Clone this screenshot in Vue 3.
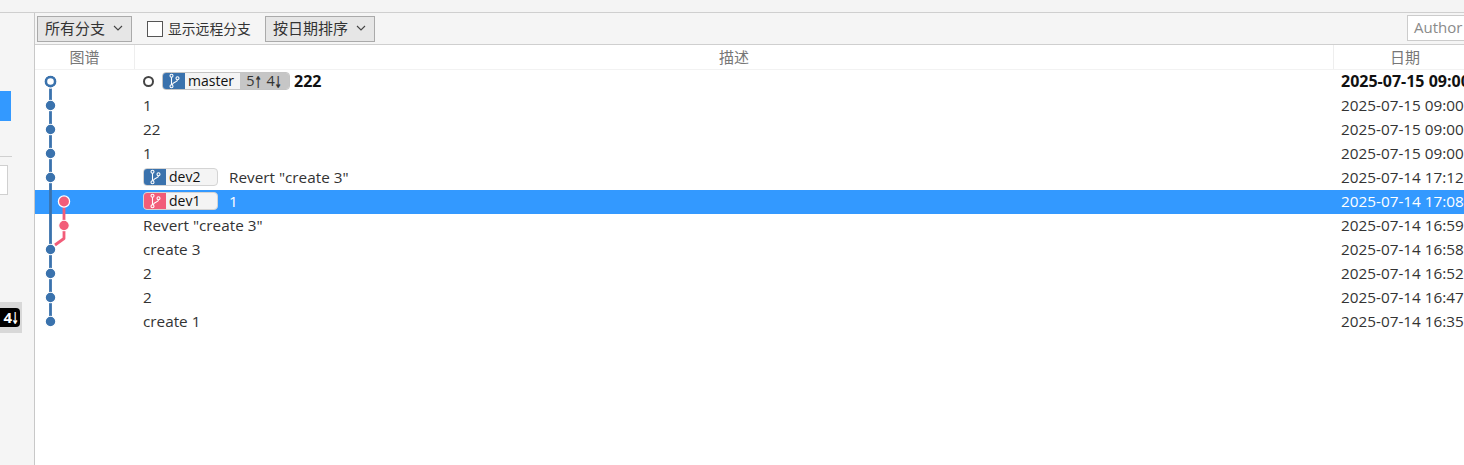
<script setup>
const rows = [
  { id: 0, msg: '222', date: '2025-07-15 09:00', bold: true, head: true, refs: [{ name: 'master', color: 'blue', track: true }] },
  { id: 1, msg: '1', date: '2025-07-15 09:00' },
  { id: 2, msg: '22', date: '2025-07-15 09:00' },
  { id: 3, msg: '1', date: '2025-07-15 09:00' },
  { id: 4, msg: 'Revert "create 3"', date: '2025-07-14 17:12', refs: [{ name: 'dev2', color: 'blue' }] },
  { id: 5, msg: '1', date: '2025-07-14 17:08', selected: true, refs: [{ name: 'dev1', color: 'red' }] },
  { id: 6, msg: 'Revert "create 3"', date: '2025-07-14 16:59' },
  { id: 7, msg: 'create 3', date: '2025-07-14 16:58' },
  { id: 8, msg: '2', date: '2025-07-14 16:52' },
  { id: 9, msg: '2', date: '2025-07-14 16:47' },
  { id: 10, msg: 'create 1', date: '2025-07-14 16:35' },
]
const blueDots = [1, 2, 3, 4, 7, 8, 9, 10].map((i) => 11.5 + i * 24)
</script>

<template>
  <div class="app">
    <div class="topstrip"></div>
    <div class="body">
      <aside class="side">
        <div class="side-active"></div>
        <div class="side-rule"></div>
        <div class="side-input"></div>
        <div class="side-badge"><span>4<b class="arr">↓</b></span></div>
      </aside>
      <main class="main">
        <div class="toolbar">
          <div class="select sel1"><span>所有分支</span>
            <svg width="10" height="6" viewBox="0 0 10 6"><path d="M1 1l4 4 4-4" fill="none" stroke="#444" stroke-width="1.1"/></svg>
          </div>
          <label class="check"><i class="box"></i><span>显示远程分支</span></label>
          <div class="select sel2"><span>按日期排序</span>
            <svg width="10" height="6" viewBox="0 0 10 6"><path d="M1 1l4 4 4-4" fill="none" stroke="#444" stroke-width="1.1"/></svg>
          </div>
          <div class="author">Author</div>
        </div>
        <div class="header">
          <div class="c-graph">图谱</div>
          <div class="c-desc">描述</div>
          <div class="c-date">日期</div>
        </div>
        <div class="list">
          <svg class="graph" width="100" height="264" viewBox="0 0 100 264">
            <path d="M15.500 11.500V251.500" stroke="#3a72ad" stroke-width="2.800" fill="none"/>
            <path d="M29 131.500V168.500L20 175" stroke="#f25d79" stroke-width="2.800" fill="none" stroke-linejoin="round"/>
            <circle cx="15.500" cy="11.500" r="4.700" fill="#fff" stroke="#3a72ad" stroke-width="2.800"/>
            <circle cx="15.500" cy="11.500" r="6.700" fill="none" stroke="#fff" stroke-width="1.200"/>
            <circle v-for="y in blueDots" :key="y" cx="15.500" :cy="y" r="5.300" fill="#3a72ad" stroke="#fff" stroke-width="1.100"/>
            <circle cx="29" cy="131.500" r="5.600" fill="#f25d79" stroke="#fff" stroke-width="1.300"/>
            <circle cx="29" cy="155.500" r="5.300" fill="#f25d79" stroke="#fff" stroke-width="1.100"/>
          </svg>
          <div v-for="r in rows" :key="r.id" class="row" :class="{ selected: r.selected, bold: r.bold }">
            <div class="r-graph"></div>
            <div class="r-desc">
              <i v-if="r.head" class="head"></i>
              <span v-for="ref in r.refs" :key="ref.name" class="ref" :class="[ref.color, { track: ref.track }]">
                <span class="ico">
                  <svg width="14" height="16" viewBox="0 0 14 16" fill="none" stroke="#fff" stroke-width="1.100">
                    <circle cx="4.500" cy="2.800" r="1.500"/>
                    <circle cx="4.500" cy="13.200" r="1.500"/>
                    <circle cx="10.500" cy="5.300" r="1.500"/>
                    <path d="M4.500 4.300V11.700"/>
                    <path d="M10.500 6.800C10.500 9.500 6.500 8.500 5.200 11.800"/>
                  </svg>
                </span>
                <span class="name">{{ ref.name }}</span>
                <span v-if="ref.track" class="count">5<b class="arr">↑</b> 4<b class="arr">↓</b></span>
              </span>
              <span class="msg">{{ r.msg }}</span>
            </div>
            <div class="r-date">{{ r.date }}</div>
          </div>
        </div>
      </main>
    </div>
  </div>
</template>

<style>
html, body { margin: 0; padding: 0; background: #fff; overflow: hidden; }
</style>

<style scoped>
.app {
  width: 1464px;
  height: 465px;
  overflow: hidden;
  display: flex;
  flex-direction: column;
  font-family: "Open Sans", "Noto Sans CJK SC", sans-serif;
  font-size: 15.300px;
  color: #333;
}
.topstrip { height: 12px; background: #f4f4f4; border-bottom: 1px solid #cfcfcf; flex: none; }
.body { flex: 1; display: flex; min-height: 0; }

.side {
  width: 35px;
  flex: none;
  box-sizing: border-box;
  background: #f5f5f5;
  border-right: 1px solid #c8c8c8;
  position: relative;
  overflow: hidden;
}
.side-active { position: absolute; left: 0; top: 78px; width: 11px; height: 30px; background: #3399ff; }
.side-rule { position: absolute; left: 0; top: 143px; width: 12px; height: 1px; background: #d0d0d0; }
.side-input { position: absolute; left: -1px; top: 152px; width: 7px; height: 28px; background: #fff; border: 1px solid #d0d0d0; }
.side-badge {
  position: absolute; left: 0; top: 289px; width: 22px; height: 31px;
  background: #d8d8d8; display: flex; align-items: center;
}
.side-badge span {
  background: #000; color: #fff; font-weight: 700; font-size: 15px;
  border-radius: 0 4px 4px 0; height: 19px; line-height: 18px; width: 20px; text-align: right; box-sizing: border-box;
}

.main { flex: 1; min-width: 0; display: flex; flex-direction: column; }

.toolbar {
  height: 32px;
  flex: none;
  box-sizing: border-box;
  background: #f5f5f5;
  border-bottom: 1px solid #cfcfcf;
  display: flex;
  align-items: center;
  padding: 1px 0 0 2px;
  position: relative;
}
.select {
  height: 26px;
  box-sizing: border-box;
  border: 1px solid #aaa;
  background: #e6e6e6;
  display: flex;
  align-items: center;
  justify-content: space-between;
  padding: 0 8px 2px 7px;
  color: #333;
  font-size: 15px;
  line-height: 1;
}
.sel1 { width: 95px; }
.sel2 { width: 110px; }
.check { display: flex; align-items: center; width: 118px; margin-left: 15px; font-size: 13.800px; color: #333; gap: 5px; }
.check span { position: relative; top: -1px; }
.box { width: 16px; height: 16px; border: 1px solid #555; background: #fff; display: block; box-sizing: border-box; flex: none; }
.author {
  position: absolute;
  left: 1372px;
  top: 2px;
  width: 80px;
  height: 26px;
  box-sizing: border-box;
  background: #fff;
  border: 1px solid #ccc;
  padding-left: 6px;
  font-size: 15px;
  line-height: 22px;
  color: #8a8a8a;
}

.header {
  height: 25px;
  flex: none;
  display: flex;
  box-sizing: border-box;
  border-bottom: 1px solid #f2f2f2;
  color: #777;
  font-size: 15px;
  line-height: 24px;
  text-align: center;
}
.c-graph { width: 100px; border-right: 1px solid #eee; box-sizing: border-box; flex: none; }
.c-desc { width: 1199px; border-right: 1px solid #eee; box-sizing: border-box; flex: none; }
.c-date { width: 142px; flex: none; }

.list { position: relative; flex: 1; }
.graph { position: absolute; left: 0; top: 0; z-index: 1; pointer-events: none; }
.row { height: 24px; box-sizing: border-box; padding-bottom: 2px; display: flex; align-items: center; white-space: nowrap; }
.row.selected { background: #3399ff; color: #fff; }
.row.bold { font-weight: 700; color: #111; font-size: 16px; }
.r-graph { width: 100px; flex: none; }
.r-desc { width: 1198px; flex: none; display: flex; align-items: center; padding-left: 8px; box-sizing: border-box; }
.r-date { padding-left: 8px; flex: none; }

.head { width: 11px; height: 11px; box-sizing: border-box; border: 2.600px solid #444; border-radius: 50%; display: block; margin: 0 8px 0 0; }
.ref {
  display: flex;
  align-items: center;
  height: 18px;
  width: 75px;
  box-sizing: border-box;
  border-radius: 4px;
  border: 1px solid #d4d4d4;
  background: #f4f4f4;
  overflow: hidden;
  margin-right: 11px;
  font-weight: 400;
  font-size: 14px;
  color: #111;
}
.ref.track { width: 128px; margin-right: 4px; border-color: #c4c4c4; }
.ico { width: 22px; height: 18px; display: flex; align-items: center; justify-content: center; flex: none; }
.blue .ico { background: #3a72ad; }
.red .ico { background: #f25d79; }
.name { padding-left: 3px; flex: 1; line-height: 16px; }
.count { background: #c6c6c6; width: 49px; height: 18px; line-height: 18px; text-align: center; flex: none; color: #333; font-size: 14.500px; white-space: nowrap; overflow: hidden; }
.arr {
  display: inline-block;
  width: 8px;
  height: 14px;
  font-size: 15px;
  line-height: 14px;
  font-weight: 700;
  vertical-align: -1px;
  transform: scale(.62, 1.1);
  text-indent: -3.500px;
  font-family: "DejaVu Sans", sans-serif;
}
.msg { display: block; }
</style>
